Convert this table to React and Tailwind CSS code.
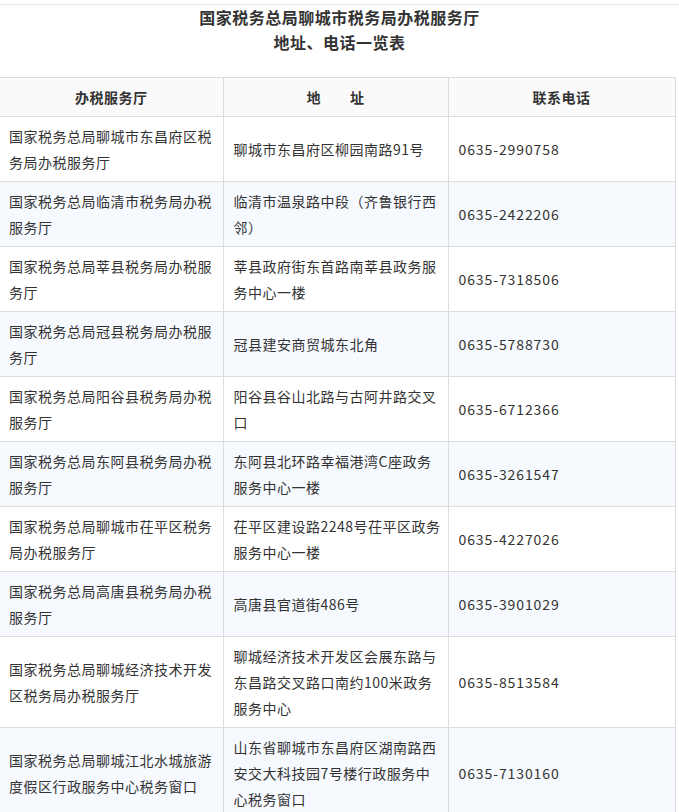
const rows = [
    { name: '国家税务总局聊城市东昌府区税务局办税服务厅', addr: '聊城市东昌府区柳园南路91号', tel: '0635-2990758' },
    { name: '国家税务总局临清市税务局办税服务厅', addr: '临清市温泉路中段（齐鲁银行西邻）', tel: '0635-2422206' },
    { name: '国家税务总局莘县税务局办税服务厅', addr: '莘县政府街东首路南莘县政务服务中心一楼', tel: '0635-7318506' },
    { name: '国家税务总局冠县税务局办税服务厅', addr: '冠县建安商贸城东北角', tel: '0635-5788730' },
    { name: '国家税务总局阳谷县税务局办税服务厅', addr: '阳谷县谷山北路与古阿井路交叉口', tel: '0635-6712366' },
    { name: '国家税务总局东阿县税务局办税服务厅', addr: '东阿县北环路幸福港湾C座政务服务中心一楼', tel: '0635-3261547' },
    { name: '国家税务总局聊城市茌平区税务局办税服务厅', addr: '茌平区建设路2248号茌平区政务服务中心一楼', tel: '0635-4227026' },
    { name: '国家税务总局高唐县税务局办税服务厅', addr: '高唐县官道街486号', tel: '0635-3901029' },
    { name: '国家税务总局聊城经济技术开发区税务局办税服务厅', addr: '聊城经济技术开发区会展东路与东昌路交叉路口南约100米政务服务中心', tel: '0635-8513584' },
    { name: '国家税务总局聊城江北水城旅游度假区行政服务中心税务窗口', addr: '山东省聊城市东昌府区湖南路西安交大科技园7号楼行政服务中心税务窗口', tel: '0635-7130160' }
];

export default function App() {
    return (
        <div
            className="min-h-screen bg-white text-[#333] pt-[4px]"
            style={{ fontFamily: '"Noto Sans CJK SC", "Noto Sans", sans-serif' }}
        >
            <div className="border-t border-[#e8e8e8]">
                {/* Title */}
                <div className="text-center font-bold text-[16px] leading-[25px] tracking-[0.5px] text-[#333]">
                    <p>国家税务总局聊城市税务局办税服务厅</p>
                    <p>地址、电话一览表</p>
                </div>

                {/* Table */}
                <table className="mt-[22px] w-[675px] table-fixed border-collapse text-[14px] leading-[26px] tracking-[0.5px]">
                    <colgroup>
                        <col className="w-[223px]" />
                        <col className="w-[225px]" />
                        <col className="w-[227px]" />
                    </colgroup>
                    <thead>
                        <tr className="bg-[#fafafa]">
                            <th className="border border-[#dddddd] border-l-0 py-[6px] font-bold text-center">办税服务厅</th>
                            <th className="border border-[#dddddd] py-[6px] font-bold text-center whitespace-pre">地　　址</th>
                            <th className="border border-[#dddddd] py-[6px] font-bold text-center">联系电话</th>
                        </tr>
                    </thead>
                    <tbody>
                        {rows.map((r, i) => (
                            <tr key={r.tel} className={i % 2 === 1 ? 'bg-[#f6f9fe]' : 'bg-white'}>
                                <td className="border border-[#dddddd] border-l-0 py-[6px] pl-[9px] pr-[6px] align-middle">{r.name}</td>
                                <td className="border border-[#dddddd] py-[6px] pl-[10px] pr-[6px] align-middle">{r.addr}</td>
                                <td className="border border-[#dddddd] py-[6px] pl-[10px] pr-[6px] align-middle tracking-[0.9px]">{r.tel}</td>
                            </tr>
                        ))}
                    </tbody>
                </table>
            </div>
        </div>
    );
}
